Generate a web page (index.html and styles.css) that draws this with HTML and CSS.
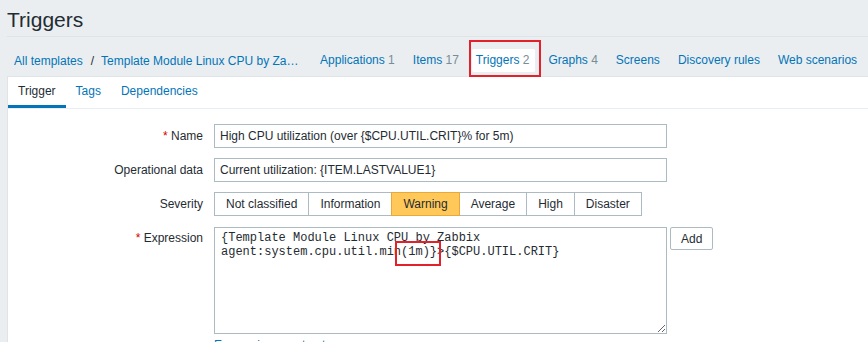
FILE: index.html
```html
<!DOCTYPE html>
<html lang="en">
<head>
    <meta charset="UTF-8">
    <title>Triggers</title>
    <link rel="stylesheet" href="styles.css">
</head>
<body>
    <div id="wrapper">
        <header class="page-header">
            <h1>Triggers</h1>
        </header>

        <nav class="host-nav">
            <div class="breadcrumbs">
                <a href="#">All templates</a>
                <span class="sep">/</span>
                <a href="#" class="crumb-name">Template Module Linux CPU by Zabbix agent</a>
            </div>
            <ul class="nav-list">
                <li><a href="#">Applications</a> <span class="count">1</span></li>
                <li><a href="#">Items</a> <span class="count">17</span></li>
                <li class="selected"><a href="#">Triggers</a> <span class="count">2</span></li>
                <li><a href="#">Graphs</a> <span class="count">4</span></li>
                <li><a href="#">Screens</a></li>
                <li><a href="#">Discovery rules</a></li>
                <li><a href="#">Web scenarios</a></li>
            </ul>
            <!-- annotation -->
            <div class="mark mark-tab"></div>
        </nav>

        <div class="form-box">
            <ul class="form-tabs">
                <li class="active"><a href="#">Trigger</a></li>
                <li><a href="#">Tags</a></li>
                <li><a href="#">Dependencies</a></li>
            </ul>

            <div class="form-grid">
                <label class="field-label"><span class="req">*</span> Name</label>
                <div class="field"><input type="text" class="text-input" value="High CPU utilization (over {$CPU.UTIL.CRIT}% for 5m)"></div>

                <label class="field-label">Operational data</label>
                <div class="field"><input type="text" class="text-input" value="Current utilization: {ITEM.LASTVALUE1}"></div>

                <label class="field-label">Severity</label>
                <div class="field">
                    <div class="btn-group">
                        <span class="sev">Not classified</span>
                        <span class="sev">Information</span>
                        <span class="sev warning">Warning</span>
                        <span class="sev">Average</span>
                        <span class="sev">High</span>
                        <span class="sev">Disaster</span>
                    </div>
                </div>

                <label class="field-label top"><span class="req">*</span> Expression</label>
                <div class="field">
                    <div class="expr-row">
                        <div class="expr-box">
                            <textarea class="expr" spellcheck="false">{Template Module Linux CPU by Zabbix agent:system.cpu.util.min(1m)}>{$CPU.UTIL.CRIT}</textarea>
                            <!-- annotation -->
                            <div class="mark mark-expr"></div>
                        </div>
                        <button class="btn-add">Add</button>
                    </div>
                    <a href="#" class="constructor">Expression constructor</a>
                </div>
            </div>
        </div>
    </div>
</body>
</html>
```

FILE: styles.css
```css
body {
    margin: 0;
    background-color: #ebeef0;
    font-family: "Liberation Sans", Arial, sans-serif;
    font-size: 12px;
    color: #1f2c33;
    overflow: hidden;
}

a {
    color: #0275b8;
    text-decoration: none;
}

#wrapper {
    padding-left: 7px;
}

.page-header {
    padding-top: 8px;
    padding-bottom: 4px;
    border-bottom: 1px solid #dfe4e7;
}

.page-header h1 {
    margin: 0;
    font-size: 21px;
    font-weight: normal;
    line-height: 24px;
}

/* host navigation */
.host-nav {
    position: relative;
    display: flex;
    align-items: center;
    padding: 12px 0 4px 7px;
    white-space: nowrap;
}

.breadcrumbs {
    display: flex;
    align-items: center;
    margin-right: 15px;
}

.breadcrumbs .sep {
    padding: 0 7px 0 8px;
}

.crumb-name {
    display: inline-block;
    max-width: 199px;
    overflow: hidden;
    text-overflow: ellipsis;
}

.nav-list {
    display: flex;
    list-style: none;
    margin: 0;
    padding: 0;
    gap: 8px;
}

.nav-list li {
    line-height: 23px;
    padding: 0 5px;
    border-radius: 2px;
}

.nav-list li.selected {
    background-color: #fff;
    padding: 0 6px 0 4px;
}

.count {
    color: #768d99;
}

/* red annotation frames */
.mark {
    position: absolute;
    border: 2px solid #e3212b;
    pointer-events: none;
}

.mark-tab {
    left: 462px;
    top: 3px;
    width: 68px;
    height: 33px;
}

.mark-expr {
    left: 181px;
    top: 14px;
    width: 42px;
    height: 21px;
}

/* form */
.form-box {
    background-color: #fff;
    border-top: 1px solid #dfe4e7;
    border-left: 1px solid #dfe4e7;
    min-height: 300px;
}

.form-tabs {
    display: flex;
    list-style: none;
    margin: 0;
    padding: 0;
    border-bottom: 1px solid #ebeef0;
}

.form-tabs li {
    line-height: 28px;
    padding: 0 10px;
    border-bottom: 3px solid transparent;
}

.form-tabs li.active {
    border-bottom-color: #0275b8;
}

.form-tabs li.active a {
    color: #1f2c33;
}

.form-grid {
    display: grid;
    grid-template-columns: 195px 453px;
    column-gap: 11px;
    row-gap: 10px;
    padding-top: 15px;
}

.field-label {
    text-align: right;
    line-height: 24px;
}

.req {
    color: #d40000;
}

.text-input {
    box-sizing: border-box;
    width: 453px;
    height: 24px;
    margin: 0;
    padding: 0 5px;
    border: 1px solid #acbbc2;
    font-family: "Liberation Sans", Arial, sans-serif;
    font-size: 12px;
    color: #1f2c33;
    outline: none;
}

.btn-group {
    display: flex;
}

.sev {
    box-sizing: border-box;
    height: 24px;
    line-height: 22px;
    padding: 0 11px;
    border: 1px solid #acbbc2;
    margin-left: -1px;
    background-color: #fff;
}

.sev:first-child {
    margin-left: 0;
}

.sev.warning {
    background-color: #ffc859;
    border-color: #e8a93c;
    position: relative;
}

.expr-row {
    display: flex;
    align-items: flex-start;
    margin-top: 1px;
}

.expr-box {
    position: relative;
}

.expr {
    display: block;
    box-sizing: border-box;
    width: 453px;
    height: 107px;
    margin: 0;
    padding: 3px 6px;
    border: 1px solid #acbbc2;
    font-family: "Liberation Mono", "Courier New", monospace;
    font-size: 12px;
    color: #1f2c33;
    outline: none;
}

.btn-add {
    margin-left: 3px;
    height: 23px;
    padding: 0 10px;
    background-color: #fff;
    border: 1px solid #acbbc2;
    border-radius: 2px;
    font-family: "Liberation Sans", Arial, sans-serif;
    font-size: 12px;
    color: #1f2c33;
}

.constructor {
    display: inline-block;
    margin-top: 4px;
    line-height: 14px;
}
```
